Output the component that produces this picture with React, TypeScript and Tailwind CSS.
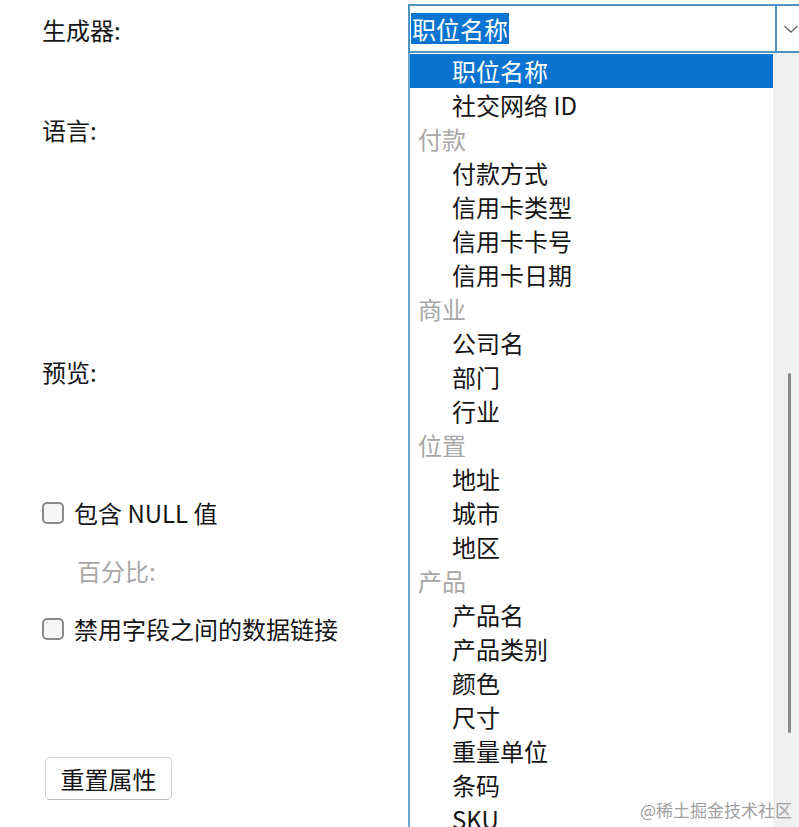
import React from "react";

type Row = { t: string; h?: boolean; sel?: boolean };

const rows: Row[] = [
  { t: "职位名称", sel: true },
  { t: "社交网络 ID" },
  { t: "付款", h: true },
  { t: "付款方式" },
  { t: "信用卡类型" },
  { t: "信用卡卡号" },
  { t: "信用卡日期" },
  { t: "商业", h: true },
  { t: "公司名" },
  { t: "部门" },
  { t: "行业" },
  { t: "位置", h: true },
  { t: "地址" },
  { t: "城市" },
  { t: "地区" },
  { t: "产品", h: true },
  { t: "产品名" },
  { t: "产品类别" },
  { t: "颜色" },
  { t: "尺寸" },
  { t: "重量单位" },
  { t: "条码" },
  { t: "SKU" },
];

const font = {
  fontFamily: '"Noto Sans CJK SC", "Noto Sans", sans-serif',
};

function Checkbox() {
  return (
    <span className="w-[22px] h-[22px] rounded-[5px] border-[2px] border-[#8a8a8a] bg-[#f6f6f6] shrink-0" />
  );
}

export default function App() {
  return (
    <div
      className="relative w-[799px] h-[827px] overflow-hidden bg-white text-[#151515] text-[24px] flex"
      style={font}
    >
      {/* left column */}
      <div className="w-[408px] shrink-0 flex flex-col pl-[42px]">
        <div className="mt-[13px] h-[34px] leading-[34px]">生成器:</div>
        <div className="mt-[66px] h-[34px] leading-[34px]">语言:</div>
        <div className="mt-[208px] h-[34px] leading-[34px]">预览:</div>
        <div className="mt-[107px] h-[34px] flex items-center gap-[10px]">
          <Checkbox />
          <span>包含 NULL 值</span>
        </div>
        <div className="mt-[24px] h-[34px] leading-[34px] pl-[35px] text-[#a8a8a8]">
          百分比:
        </div>
        <div className="mt-[24px] h-[34px] flex items-center gap-[10px]">
          <Checkbox />
          <span>禁用字段之间的数据链接</span>
        </div>
        <div className="mt-[111px] ml-[3px] w-[127px] h-[43px] rounded-[5px] border border-[#d0d0d0] border-b-[#b8b8b8] bg-white flex items-center justify-center">
          重置属性
        </div>
      </div>

      {/* right column: combobox + dropdown list */}
      <div className="flex-1 flex flex-col min-w-0">
        <div className="mt-[4px] h-[49px] w-[420px] border-[2px] border-[#4f93c1] flex shrink-0">
          <div className="w-[365px] flex items-center pl-[1px]">
            <span className="bg-[#0a74d0] text-white leading-[31px] h-[31px] px-[1px]">
              职位名称
            </span>
          </div>
          <div className="flex-1 border-l-[2px] border-[#4f93c1] flex items-center pl-[6px]">
            <svg width="16" height="10" viewBox="0 0 16 10">
              <path d="M1.5 2 L8 8 L14.5 2" fill="none" stroke="#6b6b6b" strokeWidth="1.4" />
            </svg>
          </div>
        </div>
        <div className="flex-1 flex border-l-[2px] border-[#6fa8cf] min-h-0">
          <div className="w-[363px] shrink-0 pt-[1px] flex flex-col">
            {rows.map((r, i) => (
              <div
                key={i}
                className={
                  r.sel
                    ? "h-[34px] leading-[34px] pl-[42px] bg-[#0a74d0] text-white shrink-0"
                    : r.h
                    ? "h-[34px] leading-[34px] pl-[8px] text-[#a8a8a8] shrink-0"
                    : "h-[34px] leading-[34px] pl-[42px] shrink-0"
                }
              >
                {r.t}
              </div>
            ))}
          </div>
          <div className="flex-1 bg-[#f0f0f0] flex flex-col items-end pr-[8px]">
            <div className="mt-[320px] w-[3px] h-[360px] bg-[#8a8a8a] rounded-full" />
          </div>
        </div>
      </div>

      <div
        className="absolute right-[7px] bottom-[6px] text-[17px] text-[#a0a0a0] leading-[22px]"
        style={{ fontFamily: '"Noto Sans CJK SC", serif' }}
      >
        @稀土掘金技术社区
      </div>
    </div>
  );
}
